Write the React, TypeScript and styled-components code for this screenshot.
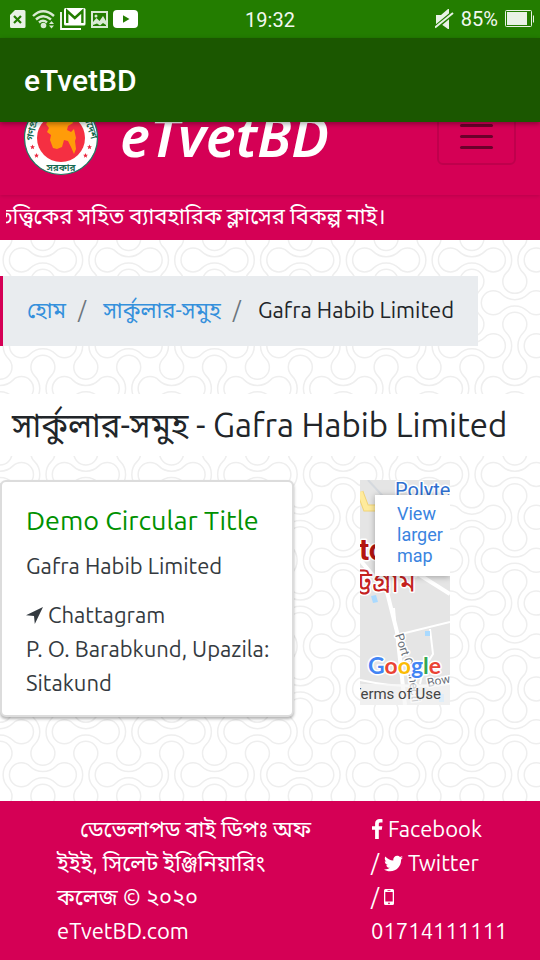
import React from 'react';
import styled, { createGlobalStyle } from 'styled-components';
import { FaTwitter } from 'react-icons/fa';

const PINK = '#d50055';
const BODY_FONT = '"Ubuntu", "Noto Sans", "Noto Sans Bengali", sans-serif';

const PERIOD = 85.8;
const DUMBBELL =
  'M-13 -8.5A18.4 18.4 0 0 0 13 -8.5A12 12 0 1 1 13 8.5A18.4 18.4 0 0 0 -13 8.5A12 12 0 1 1 -13 -8.5Z';

const buildPattern = () => {
  const half = PERIOD / 2;
  const shapes: string[] = [];
  for (let row = 0; row <= 10; row += 1) {
    for (let col = 0; col <= 10; col += 1) {
      const turn = (row + col) % 2 === 0 ? 0 : 90;
      shapes.push(
        `<path transform='translate(${(col * half).toFixed(1)} ${(row * half).toFixed(1)}) rotate(${turn})' d='${DUMBBELL}'/>`,
      );
    }
  }
  const svg = `<svg xmlns='http://www.w3.org/2000/svg' width='429' height='429' fill='none' stroke='#eeeeee' stroke-width='1.5'>${shapes.join('')}</svg>`;
  return `url("data:image/svg+xml,${encodeURIComponent(svg).replace(/\(/g, '%28').replace(/\)/g, '%29')}")`;
};

const GlobalStyle = createGlobalStyle`
  *, *::before, *::after { box-sizing: border-box; }
  body { margin: 0; background: #fff; color: #212529; font-family: ${BODY_FONT}; font-size: 22px; line-height: 34px; }
  h1, h2, h3, p { margin: 0; font-weight: 400; }
  a { color: inherit; text-decoration: none; }
  svg { display: block; flex: none; }
`;

const Screen = styled.div`
  display: flex;
  flex-direction: column;
  min-height: 100vh;
  overflow: hidden;
`;

const StatusBar = styled.div`
  display: grid;
  grid-template-columns: 1fr auto 1fr;
  align-items: center;
  height: 38px;
  padding: 0 6px 0 10px;
  background: #237d00;
  color: #f2f8f0;
  font: 20px/38px Roboto, sans-serif;
`;

const StatusGroup = styled.div<{ $end?: boolean }>`
  display: flex;
  align-items: center;
  justify-content: ${(p) => (p.$end ? 'flex-end' : 'flex-start')};
  gap: ${(p) => (p.$end ? '7px' : '5px')};
  padding-bottom: 2px;
`;

const Clock = styled.time`
  padding-right: 4px;
`;

const AppBar = styled.header`
  position: relative;
  z-index: 1;
  height: 84px;
  padding: 0 24px;
  background: #1b5700;
  color: #fff;
  box-shadow: 0 2px 5px rgba(0, 0, 0, 0.35);
`;

const AppTitle = styled.h1`
  && { font: 500 30px/86px Roboto, sans-serif; }
`;

const PageTop = styled.div`
  overflow: hidden;
  background: ${PINK};
  color: #fff;
`;

const NavBar = styled.nav`
  display: flex;
  align-items: center;
  height: 114px;
  margin-top: -41px;
  padding: 0 24px 0 23px;
  box-shadow: 0 1px 4px rgba(0, 0, 0, 0.14);
`;

const Brand = styled.a`
  display: flex;
  align-items: center;
  gap: 21px;
  margin-right: auto;
`;

const BrandName = styled.span`
  padding-bottom: 6px;
  font: italic 600 56px/76px "Noto Sans", sans-serif;
`;

const Toggler = styled.button`
  display: flex;
  flex-direction: column;
  align-items: center;
  justify-content: center;
  gap: 8px;
  width: 79px;
  height: 57px;
  margin-bottom: 3px;
  padding: 0;
  border: 2px solid rgba(0, 0, 0, 0.1);
  border-radius: 6px;
  background: none;
`;

const TogglerLine = styled.span`
  width: 33px;
  height: 3px;
  border-radius: 2px;
  background: #6b002b;
`;

const Ticker = styled.p`
  margin: 0 6px;
  padding: 4px 0 7px;
  overflow: hidden;
  text-indent: -9px;
  white-space: nowrap;
`;

const Main = styled.main`
  flex: 1;
  padding: 36px 0 84px;
  background-color: #fff;
  background-image: ${buildPattern()};
  background-position: 0 -23px;
`;

const Breadcrumb = styled.ol`
  display: flex;
  width: fit-content;
  margin: 0 0 48px;
  padding: 17px 24px 19px;
  border-left: 3px solid ${PINK};
  background: #e9ecef;
  list-style: none;
`;

const Crumb = styled.li`
  & + &::before {
    content: '/';
    padding: 0 17px 0 12px;
    color: #6c757d;
  }
`;

const CrumbLink = styled.a`
  color: #3490dc;
`;

const PageHeading = styled.h2`
  padding: 12px;
  background: #fff;
  font-size: 33px;
  line-height: 38px;
`;

const Columns = styled.div`
  display: grid;
  grid-template-columns: 8fr 2fr 2fr;
  align-items: start;
  margin-top: 24px;
`;

const Card = styled.article`
  margin-right: 66px;
  padding: 21px 18px 15px 24px;
  border: 2px solid #dcdcdc;
  border-radius: 6px;
  background: #fff;
  box-shadow: 0 2px 3px rgba(0, 0, 0, 0.3);
  color: #343a40;
`;

const CardTitle = styled.h3`
  margin-bottom: 12px;
  color: #009100;
  font-size: 27px;
  line-height: 34px;
  white-space: nowrap;
`;

const Company = styled.p`
  margin-bottom: 15px;
`;

const Address = styled.address`
  font-style: normal;
`;

const IconLine = styled.span`
  display: flex;
  align-items: center;
  gap: 5px;
`;

const MapFrame = styled.section`
  position: relative;
  overflow: hidden;
`;

const MapLink = styled.a`
  position: absolute;
  top: 15px;
  left: 15px;
  right: 0;
  padding: 8px 0 10px 22px;
  background: #fff;
  box-shadow: 0 1px 6px rgba(0, 0, 0, 0.3);
  color: #3a84df;
  font: 18px/21px Roboto, sans-serif;
`;

const Terms = styled.div`
  position: absolute;
  right: 0;
  bottom: 0;
  padding: 0 9px 0 2px;
  background: rgba(245, 245, 245, 0.7);
  color: #444;
  font: 15px/21px Roboto, sans-serif;
  white-space: nowrap;
`;

const Footer = styled.footer`
  display: flex;
  justify-content: space-between;
  padding: 11px 36px 12px 57px;
  background: ${PINK};
  color: #fff;
`;

const Credits = styled.p`
  width: 58%;
  text-indent: 23px;
`;

const Contacts = styled.div`
  width: 133px;
`;

const SimIcon = () => (
  <svg width="16" height="18" viewBox="0 0 16 18">
    <path d="M5 0h9a1.500 1.500 0 0 1 1.500 1.500v15a1.500 1.500 0 0 1-1.500 1.500H1.500A1.500 1.500 0 0 1 0 16.500V5Z" fill="#e9f2e6" />
    <path d="m4 6 7 7M11 6l-7 7" stroke="#237d00" strokeWidth="2.200" />
  </svg>
);

const WifiIcon = () => (
  <svg width="24" height="20" viewBox="0 0 24 20">
    <g fill="none" stroke="#d9ead3" strokeWidth="2.400">
      <path d="M2 7Q12-2.500 23 7" />
      <path d="M5 10.500Q12 4 20 10.500" />
      <path d="M8 13.500Q12 10 16 13.500" />
    </g>
    <circle cx="12.500" cy="16.500" r="2.800" fill="#d9ead3" />
    <path d="m18 15 2.500-3 2.500 3zM18 16.500l2.500 3 2.500-3z" fill="#d9ead3" />
  </svg>
);

const MailIcon = () => (
  <svg width="26" height="22" viewBox="0 0 26 22">
    <path d="M1 4v17h20" fill="none" stroke="#fff" strokeWidth="1.800" />
    <rect x="4" y="0" width="21.500" height="17.500" rx="1.500" fill="#fff" />
    <path d="M7.200 15V3l7.600 7 7.600-7v12" fill="none" stroke="#237d00" strokeWidth="2.400" />
  </svg>
);

const PictureIcon = () => (
  <svg width="17" height="17" viewBox="0 0 17 17">
    <rect x="1" y="1" width="15" height="15" fill="none" stroke="#d9ead3" strokeWidth="2" />
    <path d="M2 14V11l3.500-4 3 3L12 5l3 5v4l-3-2-3 2.500-3-2z" fill="#d9ead3" />
    <circle cx="5" cy="5" r="1.500" fill="#d9ead3" />
  </svg>
);

const VideoIcon = () => (
  <svg width="25" height="18" viewBox="0 0 25 18">
    <rect width="25" height="18" rx="4" fill="#fff" />
    <path d="M10 5.200v7.600L16.500 9z" fill="#237d00" />
  </svg>
);

const MuteIcon = () => (
  <svg width="19" height="20" viewBox="0 0 19 20">
    <path d="M1 6h5l7-6h1v20h-1l-7-5H1Z" fill="#e9f2e6" />
    <path d="M0 19 18 4" stroke="#237d00" strokeWidth="4.500" />
    <path d="M0 18.500 18 4" stroke="#e9f2e6" strokeWidth="2" />
  </svg>
);

const BatteryIcon = () => (
  <svg width="29" height="18" viewBox="0 0 29 18">
    <rect x="0.500" y="0.500" width="26" height="16" rx="1" fill="none" stroke="#e9f2e6" />
    <rect x="2" y="2" width="20" height="13" fill="#e9f2e6" />
    <path d="M28.500 5.500v7" stroke="#e9f2e6" />
  </svg>
);

const Emblem = () => (
  <svg width="76" height="76" viewBox="0 0 76 76" aria-hidden="true">
    <circle cx="38" cy="38" r="36.500" fill="#fff" stroke="#1c7d62" strokeWidth="1.200" />
    <circle cx="38" cy="38" r="24" fill="#f52f42" />
    <path
      d="M25 14l7 1 4 4 12-1 2 5-5 3-1 4 4 2 3-3 2 9-1 3 1 8-2 5-3-7-3-6-4-1-2 7-5 2-4-1-3-8 1-5-4-3 2-4-3-4 3-4z"
      fill="#ff9c09"
    />
    <g fill="#ea2840">
      {[[9.5, 47], [13.5, 55.5], [66.5, 47], [62.5, 55.5]].map(([x, y]) => (
        <path
          key={`${x}-${y}`}
          transform={`translate(${x} ${y})`}
          d="M0-2.500.7-.8 2.400-.8 1.100.4 1.600 2.200 0 1.200-1.600 2.200-1.100.4-2.400-.8-.7-.8Z"
        />
      ))}
    </g>
    <g fill="#14694f" fontFamily="Noto Sans Bengali, Noto Sans, sans-serif" fontSize="10" fontWeight="600" textAnchor="middle">
      <text transform="translate(12 31) rotate(-78)">গণপ্র</text>
      <text transform="translate(64 27) rotate(72)">লাদেশ</text>
      <text x="38" y="71">সরকার</text>
    </g>
  </svg>
);

const ArrowIcon = () => (
  <svg width="17" height="17" viewBox="0 0 17 17" fill="#343a40">
    <path d="M17 0 8.800 17 8 9 0 8.300Z" />
  </svg>
);

const FacebookIcon = () => (
  <svg width="12" height="20" viewBox="0 0 12 20" fill="#fff">
    <path d="M11.500.200v3.200H9.600C8.100 3.400 7.800 4.100 7.800 5.100v2.200h3.500l-.5 3.500h-3V20H4.100v-9.200H1V7.300h3.100V4.600C4.100 1.600 6 0 8.700 0c1.300 0 2.400.1 2.800.2Z" />
  </svg>
);

const PhoneIcon = () => (
  <svg width="10" height="16" viewBox="0 0 10 16">
    <path
      fillRule="evenodd"
      fill="#fff"
      d="M1.500 0h7A1.500 1.500 0 0 1 10 1.500v13A1.500 1.500 0 0 1 8.500 16h-7A1.500 1.500 0 0 1 0 14.500v-13A1.500 1.500 0 0 1 1.500 0ZM1.300 3v9.500h7.400V3ZM3.500 1.200v.7h3v-.7ZM5 13.400a.9.900 0 1 0 0 1.800.9.900 0 0 0 0-1.800Z"
    />
  </svg>
);

const MapDrawing = () => (
  <svg width="100%" height="225" viewBox="0 0 90 225" preserveAspectRatio="xMinYMin slice" role="img" aria-label="Map">
    <rect width="90" height="225" fill="#e5e5e5" />
    <g fill="none" stroke="#fff">
      <path d="M0 80 27 112 37 152 45 225" strokeWidth="4" />
      <path d="M55 92 90 114" strokeWidth="4" />
      <path d="M37 155 90 142M70 149l3 25-10 16-3 14M34 128l1 12M0 200Q45 210 90 204" strokeWidth="2" />
      <path d="M8 0 45 40" stroke="#d5d9de" strokeWidth="2" />
    </g>
    <path d="M0 12 6 28H20" fill="none" stroke="#f1d477" strokeWidth="7" />
    <path d="M0 12 6 28H20" fill="none" stroke="#ffeb9d" strokeWidth="5" />
    <g fill="#aadaff">
      <path d="m11 116 5-1 2 7-5 1zM65 151h5v5h-5zM79 214h5v8h-5z" />
    </g>
    <g stroke="#fff" strokeWidth="3" paintOrder="stroke" strokeLinejoin="round">
      <text x="35" y="17" fill="#2f6fd0" fontFamily="Roboto" fontSize="20">Polyte</text>
      <text x="-1" y="80" fill="#b3150f" fontFamily="Roboto" fontSize="30" fontWeight="700">to</text>
      <text x="56" y="112" fill="#c5221f" fontFamily="Noto Sans Bengali, Noto Sans, sans-serif" fontSize="28" textAnchor="end">চট্টগ্রাম</text>
      <g fill="#697079" fontFamily="Roboto" fontSize="12">
        <text transform="translate(35 155) rotate(72)">Port C</text>
        <text transform="translate(48 190) rotate(83)">nnecti</text>
        <text transform="translate(68 207) rotate(-11)">Bow</text>
      </g>
      <text x="8" y="194" fontFamily="Lato, sans-serif" fontSize="23" fontWeight="700">
        <tspan fill="#4285f4">G</tspan>
        <tspan fill="#ea4335">o</tspan>
        <tspan fill="#fbbc05">o</tspan>
        <tspan fill="#4285f4">g</tspan>
        <tspan fill="#34a853">l</tspan>
        <tspan fill="#ea4335">e</tspan>
      </text>
    </g>
  </svg>
);

export default function App() {
  return (
    <Screen>
      <GlobalStyle />
      <StatusBar>
        <StatusGroup>
          <SimIcon />
          <WifiIcon />
          <MailIcon />
          <PictureIcon />
          <VideoIcon />
        </StatusGroup>
        <Clock>19:32</Clock>
        <StatusGroup $end>
          <MuteIcon />
          <span>85%</span>
          <BatteryIcon />
        </StatusGroup>
      </StatusBar>
      <AppBar>
        <AppTitle>eTvetBD</AppTitle>
      </AppBar>
      <PageTop>
        <NavBar>
          <Brand href="#">
            <Emblem />
            <BrandName>eTvetBD</BrandName>
          </Brand>
          <Toggler type="button" aria-label="Toggle navigation">
            <TogglerLine />
            <TogglerLine />
            <TogglerLine />
          </Toggler>
        </NavBar>
        <Ticker>তত্ত্বিকের সহিত ব্যাবহারিক ক্লাসের বিকল্প নাই।</Ticker>
      </PageTop>
      <Main>
        <Breadcrumb>
          <Crumb><CrumbLink href="#">হোম</CrumbLink></Crumb>
          <Crumb><CrumbLink href="#">সার্কুলার-সমুহ</CrumbLink></Crumb>
          <Crumb>Gafra Habib Limited</Crumb>
        </Breadcrumb>
        <PageHeading>সার্কুলার-সমুহ - Gafra Habib Limited</PageHeading>
        <Columns>
          <Card>
            <CardTitle><a href="#">Demo Circular Title</a></CardTitle>
            <Company>Gafra Habib Limited</Company>
            <Address>
              <IconLine><ArrowIcon />Chattagram</IconLine>
              P. O. Barabkund, Upazila: Sitakund
            </Address>
          </Card>
          <MapFrame>
            <MapDrawing />
            <MapLink href="#">View larger map</MapLink>
            <Terms><a href="#">Terms of Use</a></Terms>
          </MapFrame>
        </Columns>
      </Main>
      <Footer>
        <Credits>ডেভেলাপড বাই ডিপঃ অফ ইইই, সিলেট ইঞ্জিনিয়ারিং কলেজ © ২০২০ eTvetBD.com</Credits>
        <Contacts>
          <IconLine as="a" href="#"><FacebookIcon />Facebook</IconLine>
          <IconLine>/<FaTwitter size={19} /><a href="#">Twitter</a></IconLine>
          <IconLine>/<PhoneIcon /></IconLine>
          <a href="tel:01714111111">01714111111</a>
        </Contacts>
      </Footer>
    </Screen>
  );
}
